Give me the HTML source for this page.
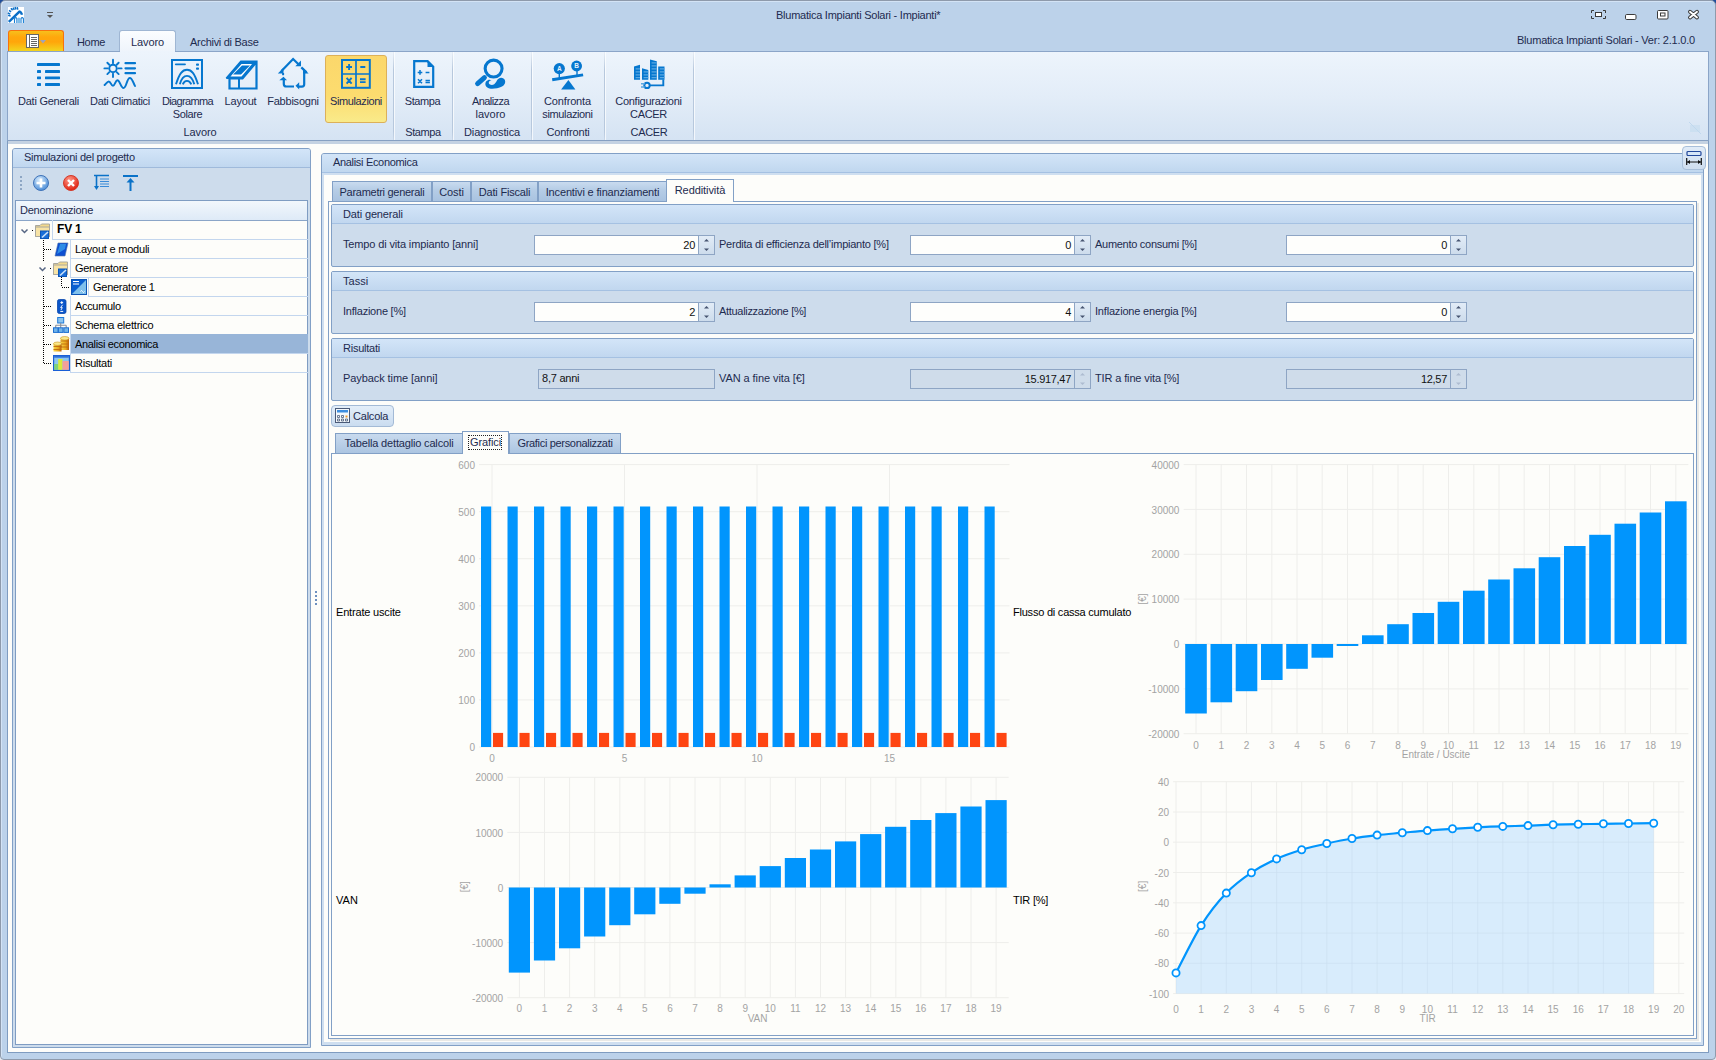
<!DOCTYPE html><html><head><meta charset="utf-8"><title>Blumatica</title><style>
*{margin:0;padding:0;box-sizing:border-box}
html,body{width:1716px;height:1060px;overflow:hidden}
body{position:relative;background:#e9eef3;font-family:"Liberation Sans",sans-serif;font-size:11px;color:#1e2b4f}
.a{position:absolute}
.t{position:absolute;white-space:nowrap;line-height:13px}
svg{position:absolute;overflow:visible}
</style></head><body><div class="a" style="left:0px;top:0px;width:5px;height:5px;background:#1f4d9a"></div><div class="a" style="left:1711px;top:0px;width:5px;height:5px;background:#1f4d9a"></div><div class="a" style="left:0px;top:0px;width:1716px;height:1060px;background:#bcd2ea;border:1px solid #8e9aab;border-radius:5px 5px 4px 4px;box-shadow:inset 1px 1px 0 #d3e3f5"></div><div class="a" style="left:7px;top:140px;width:1702px;height:913px;background:#fdfdfa;border:1px solid #7f9cc0;border-top:none"></div><svg style="left:8px;top:7px" width="16" height="16" viewBox="0 0 16 16"><rect width="16" height="16" fill="#fff"/><path d="M2.60 9.05L0.10 8.35M2.23 7.15L-0.13 6.05M3.08 4.95L1.02 3.35M4.59 3.34L2.91 1.36M6.32 2.86L4.98 0.64M7.97 2.46L7.03 0.04M9.75 2.58L9.25 0.02" stroke="#0b6fc7" stroke-width="1.5"/><path d="M0.8 14.8 L11.5 4.6 Q13.2 4.8 14 7.8" stroke="#0b6fc7" stroke-width="2.4" fill="none"/><path d="M6.5 16V11.5Q7.7 9.8 8.9 11.5V16M13 16V11.5Q14.2 9.8 15.4 11.5V16" stroke="#1a7fd4" stroke-width="1.1" fill="none"/><path d="M9.6 16V11.5Q10.9 9.5 12.2 11.5V16Z" fill="#7fbce8"/></svg><svg style="left:46px;top:11px" width="8" height="8" viewBox="0 0 8 8"><rect x="1" y="1" width="6" height="1" fill="#555"/><path d="M1 4 H7 L4 7 Z" fill="#555"/></svg><div class="t" style="left:776px;top:9px;font-size:11px;color:#1e2b4f;letter-spacing:-0.25px;">Blumatica Impianti Solari - Impianti*</div><svg style="left:1591px;top:10px" width="15" height="9" viewBox="0 0 15 9"><path d="M0.5 3 V0.5 H3 M12 0.5 H14.5 V3 M14.5 6 V8.5 H12 M3 8.5 H0.5 V6" stroke="#3a3a3a" fill="none"/><rect x="4.5" y="2.5" width="6" height="4" stroke="#3a3a3a" fill="#fff"/></svg><svg style="left:1625px;top:14px" width="12" height="7" viewBox="0 0 12 7"><rect x="0.5" y="0.5" width="10.5" height="5" rx="1.2" stroke="#3a3a3a" stroke-width="1" fill="#fff"/></svg><svg style="left:1657px;top:10px" width="12" height="10" viewBox="0 0 12 10"><rect x="0.5" y="0.5" width="10.5" height="8.5" rx="1" stroke="#3a3a3a" stroke-width="1" fill="#fff"/><rect x="3.5" y="3" width="4.5" height="3" stroke="#3a3a3a" stroke-width="1" fill="#fff"/></svg><svg style="left:1687px;top:9px" width="13" height="11" viewBox="0 0 13 11"><path d="M3 2.8 L10 8.5 M10 2.8 L3 8.5" stroke="#3a3a3a" stroke-width="3.9" stroke-linecap="round"/><path d="M3 2.8 L10 8.5 M10 2.8 L3 8.5" stroke="#fff" stroke-width="1.9" stroke-linecap="round"/></svg><div class="a" style="left:8px;top:30px;width:56px;height:21px;background:linear-gradient(#f7c01c,#ffa70c 30%,#ffa60a 55%,#f2d41f);border:1px solid #f7720c;border-bottom:none;border-radius:3px 3px 0 0"></div><svg style="left:26px;top:34px" width="14" height="14" viewBox="0 0 14 14"><rect x="0.5" y="0.5" width="12" height="13" fill="#fff" stroke="#666"/><rect x="0.5" y="0.5" width="3" height="13" fill="#fff" stroke="#666"/><path d="M5 3.5H11M5 5.5H11M5 7.5H11M5 9.5H11M5 11.5H11" stroke="#666"/></svg><svg style="left:40px;top:40px" width="6" height="4" viewBox="0 0 6 4"><path d="M0 0H6L3 3.5Z" fill="#a0a4b8"/></svg><div class="t" style="left:77px;top:36px;font-size:11px;color:#1e2b4f;letter-spacing:-0.333px;">Home</div><div class="a" style="left:119px;top:30px;width:57px;height:22px;background:linear-gradient(#fbfdff,#eef4fb);border:1px solid #9fb6d3;border-bottom:none;border-radius:3px 3px 0 0"></div><div class="t" style="left:131px;top:36px;font-size:11px;color:#1e2b4f;letter-spacing:-0.1px;">Lavoro</div><div class="t" style="left:190px;top:36px;font-size:11px;color:#1e2b4f;letter-spacing:-0.286px;">Archivi di Base</div><div class="t" style="left:1517px;top:34px;font-size:11px;color:#1e2b4f;letter-spacing:-0.231px;">Blumatica Impianti Solari - Ver: 2.1.0.0</div><div class="a" style="left:7px;top:51px;width:1702px;height:90px;background:linear-gradient(#edf4fc,#e3edf8 50%,#d5e3f3);border:1px solid #8ba5c8;border-bottom-color:#86a0c2"></div><div class="a" style="left:8px;top:141px;width:1700px;height:3px;background:#c4d2e2"></div><div class="a" style="left:120px;top:51px;width:55px;height:1px;background:#edf4fc"></div><div class="a" style="left:393px;top:52px;width:1px;height:88px;background:linear-gradient(#e8eef6,#b7c8dd 20%,#b7c8dd 90%,#c9d7e8)"></div><div class="a" style="left:394px;top:52px;width:1px;height:88px;background:rgba(255,255,255,0.7)"></div><div class="a" style="left:452px;top:52px;width:1px;height:88px;background:linear-gradient(#e8eef6,#b7c8dd 20%,#b7c8dd 90%,#c9d7e8)"></div><div class="a" style="left:453px;top:52px;width:1px;height:88px;background:rgba(255,255,255,0.7)"></div><div class="a" style="left:531px;top:52px;width:1px;height:88px;background:linear-gradient(#e8eef6,#b7c8dd 20%,#b7c8dd 90%,#c9d7e8)"></div><div class="a" style="left:532px;top:52px;width:1px;height:88px;background:rgba(255,255,255,0.7)"></div><div class="a" style="left:604px;top:52px;width:1px;height:88px;background:linear-gradient(#e8eef6,#b7c8dd 20%,#b7c8dd 90%,#c9d7e8)"></div><div class="a" style="left:605px;top:52px;width:1px;height:88px;background:rgba(255,255,255,0.7)"></div><div class="a" style="left:693px;top:52px;width:1px;height:88px;background:linear-gradient(#e8eef6,#b7c8dd 20%,#b7c8dd 90%,#c9d7e8)"></div><div class="a" style="left:694px;top:52px;width:1px;height:88px;background:rgba(255,255,255,0.7)"></div><div class="a" style="left:325px;top:55px;width:62px;height:68px;background:linear-gradient(#fbd76b,#fcdc6f 60%,#f9ea8a);border:1px solid #dcb05a;border-radius:3px"></div><svg style="left:37px;top:62px" width="24" height="25" viewBox="0 0 24 25"><rect x="0" y="1" width="23" height="2.9" rx="0.4" fill="#0677cf"/><rect x="0" y="8" width="4" height="2.9" rx="0.4" fill="#0677cf"/><rect x="8" y="8" width="15" height="2.9" rx="0.4" fill="#0677cf"/><rect x="0" y="14.6" width="4" height="2.6" rx="0.4" fill="#0677cf"/><rect x="8" y="14.6" width="15" height="2.6" rx="0.4" fill="#0677cf"/><rect x="0" y="21" width="4" height="2.9" rx="0.4" fill="#0677cf"/><rect x="8" y="21" width="15" height="2.9" rx="0.4" fill="#0677cf"/></svg><svg style="left:104px;top:59px" width="33" height="31" viewBox="0 0 33 31"><circle cx="9" cy="9.4" r="3.7" fill="none" stroke="#0677cf" stroke-width="1.9"/><path d="M14.20 9.40L17.60 9.40M12.68 13.08L14.66 15.06M9.00 14.60L9.00 18.00M5.32 13.08L3.34 15.06M3.80 9.40L0.40 9.40M5.32 5.72L3.34 3.74M9.00 4.20L9.00 0.80M12.68 5.72L14.66 3.74" stroke="#0677cf" stroke-width="1.9" stroke-linecap="round"/><path d="M21.5 4.2H31M21.5 9.3H31M21.5 14.2H31" stroke="#0677cf" stroke-width="2.2" stroke-linecap="round"/><path d="M0.6 26 C2.5 24 3.5 22.5 4.8 22.5 C6.8 22.5 7 26.7 9 26.7 C11 26.7 11.5 21.3 13.4 21.3 C15.8 21.3 17 29 19.5 29 C22.5 29 22.8 19 25.8 19 C28.5 19 29.5 25 31 27" stroke="#0677cf" stroke-width="2" fill="none" stroke-linecap="round"/></svg><svg style="left:171px;top:59px" width="32" height="30" viewBox="0 0 32 30"><rect x="1" y="1" width="30" height="28" fill="none" stroke="#0677cf" stroke-width="2"/><path d="M4.8 5.3H14" stroke="#0677cf" stroke-width="1.8" stroke-linecap="round"/><rect x="25" y="4.6" width="3" height="2.2" rx="0.8" fill="#0677cf"/><rect x="25" y="8.6" width="3" height="2.2" rx="0.8" fill="#0677cf"/><path d="M5 25.3 C8.5 14 11.5 10.8 16 10.8 C20.5 10.8 23.5 14 27 25.3" stroke="#0677cf" stroke-width="1.9" fill="none"/><path d="M8.8 25.3 C10.5 19 12.8 16.9 16 16.9 C19.2 16.9 21.5 19 23.3 25.3" stroke="#0677cf" stroke-width="1.9" fill="none"/><path d="M11.8 25.3 C12.8 22.8 14 21.9 16 21.9 C18 21.9 19.2 22.8 20.3 25.3" stroke="#0677cf" stroke-width="1.9" fill="none"/></svg><svg style="left:225px;top:60px" width="33" height="30" viewBox="0 0 33 30"><path d="M1.5 18.5 L16 1.5 H31.5 V28.5 H4.5 V18.5 H17.5 L31 2.5" stroke="#0677cf" stroke-width="2.2" fill="none" stroke-linejoin="miter"/><path d="M1 19 L16 1 H32 L17 19 Z" fill="#0677cf"/><path d="M5.5 16.5 L16.5 4 H27 L16.5 16.5 Z" fill="#fff" /><path d="M8 14.5 L17 5.5 H25 L16 14.5 Z" fill="#0677cf"/><path d="M14 19V28" stroke="#0677cf" stroke-width="2"/></svg><svg style="left:277px;top:58px" width="33" height="32" viewBox="0 0 33 32"><path d="M4.5 13 L16.1 1 L22.5 7.3" stroke="#0677cf" stroke-width="2.2" fill="none"/><path d="M0.8 15.4 L6.5 9.7 V15.4 Z" fill="#0677cf"/><path d="M6.1 15 V17.2" stroke="#0677cf" stroke-width="2"/><path d="M18.3 8.2 H24 V2.5 Z" fill="#0677cf"/><path d="M24.3 9.4 L29.5 14.4" stroke="#0677cf" stroke-width="2.2"/><path d="M26 15.4 H31.6 L26 9.8 Z" fill="#0677cf"/><path d="M27.2 15 V26.3 Q27.2 28.6 24.9 28.6 H21.5" stroke="#0677cf" stroke-width="2.2" fill="none"/><path d="M22.2 24.2 V31.5 L18.5 27.8 Z" fill="#0677cf"/><path d="M17 28.5 H9.3 Q6.8 28.5 6.8 26 V21.5" stroke="#0677cf" stroke-width="2.2" fill="none"/><path d="M2.3 22.2 H10 L6.5 18.8 Z" fill="#0677cf"/></svg><svg style="left:341px;top:59px" width="31" height="30" viewBox="0 0 31 30"><rect x="1" y="1" width="27.8" height="27.8" fill="none" stroke="#0677cf" stroke-width="2"/><path d="M15 1V29M1 15H29" stroke="#0677cf" stroke-width="1.7"/><path d="M5.2 8H11M8.1 5.1V10.9M19.3 8H24.3" stroke="#0677cf" stroke-width="1.9"/><path d="M5.6 18.8L10.6 24.6M10.6 18.8L5.6 24.6M19 20.3H24.6M19 23.1H24.6" stroke="#0677cf" stroke-width="1.9"/></svg><svg style="left:413px;top:60px" width="22" height="29" viewBox="0 0 22 29"><path d="M1.2 1.2 H14.6 L20.2 6.8 V26.8 H1.2 Z" fill="none" stroke="#0677cf" stroke-width="2.2"/><path d="M14.5 1 V7 H20.5 Z" fill="#0677cf"/><path d="M4.7 12.4H9.3M7 10.1V14.7M12.6 12.4H16.4M5 19.3L9 23.3M9 19.3L5 23.3M12.5 20.4H16.9M12.5 22.5H16.9" stroke="#0677cf" stroke-width="1.5"/></svg><svg style="left:475px;top:58px" width="32" height="31" viewBox="0 0 32 31"><circle cx="18.6" cy="10.6" r="8.45" fill="none" stroke="#0677cf" stroke-width="3.1"/><path d="M2.6 25.6 L9.4 19.7" stroke="#0677cf" stroke-width="5" stroke-linecap="round"/><path d="M16.5 22.3 C15 21.3 13 21.3 11.3 23.3 C9.3 26 10.5 29.5 14.5 30.5 C18 31.3 23 30.3 27 28.5 C31 26.5 31 22 28.5 20.5 C26 19 23 20 21.4 23.5 C19.5 27 17 27.5 15 26.5 C13 25.5 13.5 22.8 16.5 22.3 Z" fill="#0677cf"/></svg><svg style="left:551px;top:60px" width="33" height="30" viewBox="0 0 33 30"><path d="M1.2 19.8 L32.1 14.9" stroke="#0677cf" stroke-width="2.9"/><circle cx="8.3" cy="8.6" r="5.6" fill="#0677cf"/><circle cx="25.6" cy="6" r="5.4" fill="#0677cf"/><path d="M8.3 13V18.5M26 11V16" stroke="#0677cf" stroke-width="1.4"/><path d="M10.1 29.6 L17.4 20.1 L24.4 29.6 Z" fill="#0677cf"/><text x="8.3" y="11" font-size="6.5" font-weight="bold" fill="#e6f0fa" text-anchor="middle" font-family="Liberation Sans">A</text><text x="25.6" y="8.4" font-size="6.5" font-weight="bold" fill="#e6f0fa" text-anchor="middle" font-family="Liberation Sans">B</text></svg><svg style="left:633px;top:59px" width="33" height="30" viewBox="0 0 33 30"><path d="M1 7.5 L7 5.8 V20.8 H1 Z M9 9.3 L15.3 11 V20.8 H9 Z M17 0.5 L23.8 2.3 V20.8 H17 Z M25.2 7.5 H31.5 V20.8 H25.2 Z" fill="#0677cf"/><path d="M2.6 9.8H7M2.6 12.8H7M2.6 15.9H7M2.6 18.7H7M10.6 12.8H15.3M10.6 15.9H15.3M10.6 18.7H15.3M18.6 3.8H23.8M18.6 6.8H23.8M18.6 9.8H23.8M18.6 12.8H23.8M18.6 15.9H23.8M18.6 18.7H23.8M26.8 9.8H31.5M26.8 12.8H31.5M26.8 15.9H31.5M26.8 18.7H31.5" stroke="#5aa8e2" stroke-width="1.3"/><path d="M30.3 20.5 V26.4 H16.5" stroke="#0677cf" stroke-width="1.9" fill="none"/><circle cx="14" cy="26.4" r="2.7" fill="none" stroke="#0677cf" stroke-width="2"/><path d="M8 24.7 H11.8 M8 28 H11.8" stroke="#5aa8e2" stroke-width="1.5"/></svg><div class="t" style="left:-51.5px;width:200px;text-align:center;top:95px;letter-spacing:-0.25px">Dati Generali</div><div class="t" style="left:20px;width:200px;text-align:center;top:95px;letter-spacing:-0.308px">Dati Climatici</div><div class="t" style="left:87.5px;width:200px;text-align:center;top:95px;letter-spacing:-0.625px">Diagramma</div><div class="t" style="left:87.5px;width:200px;text-align:center;top:108px;letter-spacing:-0.4px">Solare</div><div class="t" style="left:140.5px;width:200px;text-align:center;top:95px;letter-spacing:-0.2px">Layout</div><div class="t" style="left:193px;width:200px;text-align:center;top:95px;letter-spacing:-0.222px">Fabbisogni</div><div class="t" style="left:256px;width:200px;text-align:center;top:95px;letter-spacing:-0.4px">Simulazioni</div><div class="t" style="left:322.5px;width:200px;text-align:center;top:95px;letter-spacing:-0.4px">Stampa</div><div class="t" style="left:390.5px;width:200px;text-align:center;top:95px;letter-spacing:-0.571px">Analizza</div><div class="t" style="left:390.5px;width:200px;text-align:center;top:108px;letter-spacing:0.0px">lavoro</div><div class="t" style="left:467.5px;width:200px;text-align:center;top:95px;letter-spacing:-0.162px">Confronta</div><div class="t" style="left:467.5px;width:200px;text-align:center;top:108px;letter-spacing:-0.37px">simulazioni</div><div class="t" style="left:548.5px;width:200px;text-align:center;top:95px;letter-spacing:-0.277px">Configurazioni</div><div class="t" style="left:548.5px;width:200px;text-align:center;top:108px;letter-spacing:-0.325px">CACER</div><div class="t" style="left:100px;width:200px;text-align:center;top:126px;letter-spacing:-0.1px">Lavoro</div><div class="t" style="left:323px;width:200px;text-align:center;top:126px;letter-spacing:-0.4px">Stampa</div><div class="t" style="left:392px;width:200px;text-align:center;top:126px;letter-spacing:-0.14px">Diagnostica</div><div class="t" style="left:468px;width:200px;text-align:center;top:126px;letter-spacing:-0.175px">Confronti</div><div class="t" style="left:549px;width:200px;text-align:center;top:126px;letter-spacing:-0.325px">CACER</div><svg style="left:1689px;top:122px" width="12" height="12" viewBox="0 0 12 12"><rect x="1" y="3" width="10" height="7" fill="#c9dff0" opacity="0.8"/><path d="M0 0L12 12" stroke="#c0d8ee"/></svg><div class="a" style="left:12px;top:148px;width:299px;height:900px;background:#cddcec;border:1px solid #82a0c6;border-radius:3px 3px 0 0"></div><div class="a" style="left:13px;top:149px;width:297px;height:19px;background:linear-gradient(#d3e5f8,#c0d7ef);border-bottom:1px solid #9fbadb;border-radius:2px 2px 0 0"></div><div class="t" style="left:24px;top:151px;font-size:11px;color:#1e2b4f;letter-spacing:-0.278px;">Simulazioni del progetto</div><div class="a" style="left:20px;top:176px;width:2px;height:2px;background:#8da6c4"></div><div class="a" style="left:20px;top:180px;width:2px;height:2px;background:#8da6c4"></div><div class="a" style="left:20px;top:184px;width:2px;height:2px;background:#8da6c4"></div><div class="a" style="left:20px;top:188px;width:2px;height:2px;background:#8da6c4"></div><svg style="left:33px;top:175px" width="16" height="16" viewBox="0 0 16 16"><defs><radialGradient id="gA" cx="40%" cy="30%" r="70%"><stop offset="0" stop-color="#d7ecfd"/><stop offset="1" stop-color="#4f8fd8"/></radialGradient></defs><circle cx="8" cy="8" r="7.5" fill="url(#gA)" stroke="#3f73b8"/><path d="M8 3.5V12.5M3.5 8H12.5" stroke="#fff" stroke-width="2.6"/><path d="M8 4V12M4 8H12" stroke="#fff" stroke-width="1.8"/></svg><svg style="left:63px;top:175px" width="16" height="16" viewBox="0 0 16 16"><defs><radialGradient id="gR" cx="40%" cy="30%" r="70%"><stop offset="0" stop-color="#ff9a8a"/><stop offset="1" stop-color="#e0200f"/></radialGradient></defs><circle cx="8" cy="8" r="7.5" fill="url(#gR)" stroke="#d33a2a"/><path d="M5 5L11 11M11 5L5 11" stroke="#fff" stroke-width="2.4"/></svg><svg style="left:94px;top:175px" width="15" height="15" viewBox="0 0 15 15"><path d="M0 0.5H15" stroke="#0a72c8" stroke-width="1.5"/><path d="M2.5 1V12" stroke="#0a72c8" stroke-width="1.6"/><path d="M0 11H5L2.5 15Z" fill="#0a72c8"/><path d="M6 4H15M6 6.5H15M6 9H15M6 11.5H15" stroke="#3a8bd8" stroke-width="1.2"/></svg><svg style="left:123px;top:175px" width="15" height="16" viewBox="0 0 15 16"><path d="M0 1H15" stroke="#0a72c8" stroke-width="2"/><path d="M7.5 6V16" stroke="#0a72c8" stroke-width="2"/><path d="M3.5 7.5L7.5 3L11.5 7.5Z" fill="#0a72c8"/></svg><div class="a" style="left:15px;top:200px;width:293px;height:845px;background:#fdfdfa;border:1px solid #7f9cc2"></div><div class="a" style="left:16px;top:201px;width:291px;height:20px;background:linear-gradient(#f2f7fc,#deeaf7);border-bottom:1px solid #8aa5c8"></div><div class="t" style="left:20px;top:204px;font-size:11px;color:#1e2b4f;letter-spacing:-0.258px;">Denominazione</div><div class="a" style="left:52px;top:220px;width:256px;height:20px;background:transparent;border-left:1px solid #c3d6ee;border-bottom:1px solid #c3d6ee"></div><div class="t" style="left:57px;top:223px;font-size:12px;font-weight:bold;color:#000;letter-spacing:-0.2px">FV 1</div><div class="a" style="left:70px;top:239px;width:238px;height:20px;background:transparent;border-left:1px solid #c3d6ee;border-bottom:1px solid #c3d6ee"></div><div class="t" style="left:75px;top:243px;font-size:11px;color:#000;letter-spacing:-0.221px;">Layout e moduli</div><div class="a" style="left:70px;top:258px;width:238px;height:20px;background:transparent;border-left:1px solid #c3d6ee;border-bottom:1px solid #c3d6ee"></div><div class="t" style="left:75px;top:262px;font-size:11px;color:#000;letter-spacing:-0.278px;">Generatore</div><div class="a" style="left:88px;top:277px;width:220px;height:20px;background:transparent;border-left:1px solid #c3d6ee;border-bottom:1px solid #c3d6ee"></div><div class="t" style="left:93px;top:281px;font-size:11px;color:#000;letter-spacing:-0.264px;">Generatore 1</div><div class="a" style="left:70px;top:296px;width:238px;height:20px;background:transparent;border-left:1px solid #c3d6ee;border-bottom:1px solid #c3d6ee"></div><div class="t" style="left:75px;top:300px;font-size:11px;color:#000;letter-spacing:-0.329px;">Accumulo</div><div class="a" style="left:70px;top:315px;width:238px;height:20px;background:transparent;border-left:1px solid #c3d6ee;border-bottom:1px solid #c3d6ee"></div><div class="t" style="left:75px;top:319px;font-size:11px;color:#000;letter-spacing:-0.213px;">Schema elettrico</div><div class="a" style="left:70px;top:334px;width:238px;height:20px;background:#98b5d8;border-left:1px solid #c3d6ee;border-bottom:1px solid #c3d6ee"></div><div class="t" style="left:75px;top:338px;font-size:11px;color:#000;letter-spacing:-0.331px;">Analisi economica</div><div class="a" style="left:70px;top:353px;width:238px;height:20px;background:transparent;border-left:1px solid #c3d6ee;border-bottom:1px solid #c3d6ee"></div><div class="t" style="left:75px;top:357px;font-size:11px;color:#000;letter-spacing:-0.237px;">Risultati</div><div class="a" style="left:43px;top:240px;width:1px;height:22px;background:repeating-linear-gradient(#000 0 1px,transparent 1px 2px)"></div><div class="a" style="left:43px;top:276px;width:1px;height:87px;background:repeating-linear-gradient(#000 0 1px,transparent 1px 2px)"></div><div class="a" style="left:44px;top:249px;width:8px;height:1px;background:repeating-linear-gradient(90deg,#000 0 1px,transparent 1px 2px)"></div><div class="a" style="left:44px;top:306px;width:8px;height:1px;background:repeating-linear-gradient(90deg,#000 0 1px,transparent 1px 2px)"></div><div class="a" style="left:44px;top:325px;width:8px;height:1px;background:repeating-linear-gradient(90deg,#000 0 1px,transparent 1px 2px)"></div><div class="a" style="left:44px;top:344px;width:8px;height:1px;background:repeating-linear-gradient(90deg,#000 0 1px,transparent 1px 2px)"></div><div class="a" style="left:44px;top:363px;width:8px;height:1px;background:repeating-linear-gradient(90deg,#000 0 1px,transparent 1px 2px)"></div><div class="a" style="left:32px;top:230px;width:1px;height:1px;background:#000"></div><div class="a" style="left:50px;top:268px;width:1px;height:1px;background:#000"></div><div class="a" style="left:61px;top:277px;width:1px;height:10px;background:repeating-linear-gradient(#000 0 1px,transparent 1px 2px)"></div><div class="a" style="left:62px;top:287px;width:8px;height:1px;background:repeating-linear-gradient(90deg,#000 0 1px,transparent 1px 2px)"></div><svg style="left:21px;top:229px" width="7" height="5" viewBox="0 0 7 5"><path d="M0.5 0.5L3.5 3.5L6.5 0.5" stroke="#566683" stroke-width="1.5" fill="none"/></svg><svg style="left:39px;top:267px" width="7" height="5" viewBox="0 0 7 5"><path d="M0.5 0.5L3.5 3.5L6.5 0.5" stroke="#566683" stroke-width="1.5" fill="none"/></svg><svg style="left:35px;top:223px" width="15" height="16" viewBox="0 0 15 16"><path d="M0.5 2.5H5L6.5 1H14.5V13.5H0.5Z" fill="#f3d98b" stroke="#a8a8a0"/><path d="M0.5 4H14.5V13.5H0.5Z" fill="#f7e3a5" stroke="#a8a8a0"/><rect x="5.5" y="8" width="8" height="7.5" fill="#1b6fd8" stroke="#0b55b8"/><path d="M7 14.5L13 9" stroke="#cfe4fa" stroke-width="1.6"/></svg><svg style="left:53px;top:261px" width="15" height="16" viewBox="0 0 15 16"><path d="M0.5 2.5H5L6.5 1H14.5V13.5H0.5Z" fill="#f3d98b" stroke="#a8a8a0"/><path d="M0.5 4H14.5V13.5H0.5Z" fill="#f7e3a5" stroke="#a8a8a0"/><rect x="5.5" y="8" width="8" height="7.5" fill="#1b6fd8" stroke="#0b55b8"/><path d="M7 14.5L13 9" stroke="#cfe4fa" stroke-width="1.6"/></svg><svg style="left:54px;top:242px" width="15" height="15" viewBox="0 0 15 15"><path d="M4 1H14L11 14H1Z" fill="#0d4fd0" stroke="#5577aa" stroke-width="0.6"/><path d="M6 2H12L11 7L3 12Z" fill="#2f8de6"/></svg><svg style="left:71px;top:279px" width="16" height="16" viewBox="0 0 16 16"><rect x="0.5" y="0.5" width="15" height="15" fill="#0a5fd0" stroke="#0b54b5"/><path d="M15 1V15H1Z" fill="#7fc0ec"/><path d="M2 2.5H8M2 5H8" stroke="#fff" stroke-width="1.2"/><path d="M9.5 12.5Q10.5 10.5 11.5 12.5T13.5 12.5" stroke="#fff" fill="none"/></svg><svg style="left:57px;top:299px" width="10" height="15" viewBox="0 0 10 15"><rect x="0.5" y="0.5" width="8.5" height="14" rx="1.8" fill="#0b56c9" stroke="#0a49ad" stroke-width="0.8"/><path d="M4.75 2.2V5M3.35 3.6H6.15M3.3 12.4H6.2" stroke="#fff" stroke-width="1"/><path d="M5.6 5.8L3.6 8.6H5.3L4 11" stroke="#fff" stroke-width="0.9" fill="none"/></svg><svg style="left:53px;top:317px" width="18" height="16" viewBox="0 0 18 16"><rect x="4.7" y="0.5" width="6" height="5.5" fill="#8cc4ee" stroke="#1f7ad8"/><path d="M7.7 6V8.2M2.7 8.2H13.2M2.7 8.2V11M7.7 8.2V11M13.2 8.2V11" stroke="#8a8f98" stroke-width="1.1" fill="none"/><rect x="0.5" y="10.8" width="4.6" height="4.6" fill="#6fb4ea" stroke="#1f6fd0"/><rect x="5.4" y="10.8" width="4.6" height="4.6" fill="#6fb4ea" stroke="#1f6fd0"/><rect x="10.9" y="10.8" width="4.6" height="4.6" fill="#6fb4ea" stroke="#1f6fd0"/></svg><svg style="left:53px;top:336px" width="17" height="17" viewBox="0 0 17 17"><defs><linearGradient id="gc" x1="0" x2="1"><stop offset="0" stop-color="#f8d84a"/><stop offset="0.6" stop-color="#e9a81a"/><stop offset="1" stop-color="#b85a0a"/></linearGradient></defs><rect x="7.5" y="2" width="8.5" height="12" fill="url(#gc)"/><path d="M7.5 5H16M7.5 8H16M7.5 11H16" stroke="#c06a10" stroke-width="0.9"/><ellipse cx="11.75" cy="2.3" rx="4.25" ry="1.8" fill="#fbe88a" stroke="#c8901a" stroke-width="0.6"/><rect x="0.5" y="7.5" width="8" height="8" fill="url(#gc)"/><path d="M0.5 10.5H8.5M0.5 13.5H8.5" stroke="#c06a10" stroke-width="0.9"/><ellipse cx="4.5" cy="7.7" rx="4" ry="1.7" fill="#fbe88a" stroke="#c8901a" stroke-width="0.6"/></svg><svg style="left:53px;top:355px" width="17" height="16" viewBox="0 0 17 16"><rect x="0.6" y="0.6" width="15.8" height="14.8" fill="#8ec6ee" stroke="#1a5fd6" stroke-width="1.2"/><rect x="1.2" y="1.2" width="14.6" height="1.4" fill="#1a5fd6"/><rect x="1.2" y="9" width="4" height="5.8" fill="#7ed27a"/><rect x="5.2" y="4" width="4.3" height="10.8" fill="#d8ec3a"/><rect x="9.5" y="6" width="6.3" height="8.8" fill="#f4a09a"/></svg><div class="a" style="left:315px;top:591px;width:2px;height:2px;background:#6d90bf"></div><div class="a" style="left:315px;top:595px;width:2px;height:2px;background:#6d90bf"></div><div class="a" style="left:315px;top:599px;width:2px;height:2px;background:#6d90bf"></div><div class="a" style="left:315px;top:603px;width:2px;height:2px;background:#6d90bf"></div><div class="a" style="left:321px;top:153px;width:1383px;height:893px;background:#cfdff0;border:1px solid #82a0c6;border-radius:3px 3px 0 0"></div><div class="a" style="left:322px;top:154px;width:1381px;height:19px;background:linear-gradient(#d3e5f8,#c0d7ef);border-bottom:1px solid #a5c1e2;border-radius:2px 2px 0 0"></div><div class="t" style="left:333px;top:156px;font-size:11px;color:#1e2b4f;letter-spacing:-0.319px;">Analisi Economica</div><div class="a" style="left:324px;top:175px;width:1377px;height:867px;background:#fdfdfa"></div><div class="a" style="left:1682px;top:146px;width:24px;height:24px;background:linear-gradient(#e1ecf8,#cfdeef);border:1px solid #a8bfda;border-radius:4px"></div><svg style="left:1686px;top:150px" width="16" height="16" viewBox="0 0 16 16"><rect x="1" y="1.5" width="14" height="4" rx="1" fill="#d6e6f7" stroke="#23489a" stroke-width="1.2"/><path d="M0.7 8V15M15.3 8V15M1 12H15" stroke="#111" stroke-width="1.2"/><path d="M1 12L4 10V14ZM15 12L12 10V14Z" fill="#111"/></svg><div class="a" style="left:328px;top:201px;width:1369px;height:838px;background:#fdfdfa;border:1px solid #82a0c6;box-shadow:2px 2px 0 #e9e9e6"></div><div class="a" style="left:332px;top:181px;width:100px;height:21px;background:linear-gradient(#c9dbef,#b6cde6 40%,#a9c3e0);border:1px solid #82a0c6"></div><div class="t" style="left:332px;width:100px;text-align:center;top:186px;letter-spacing:-0.276px">Parametri generali</div><div class="a" style="left:432px;top:181px;width:39px;height:21px;background:linear-gradient(#c9dbef,#b6cde6 40%,#a9c3e0);border:1px solid #82a0c6"></div><div class="t" style="left:432px;width:39px;text-align:center;top:186px;letter-spacing:-0.1px">Costi</div><div class="a" style="left:471px;top:181px;width:67px;height:21px;background:linear-gradient(#c9dbef,#b6cde6 40%,#a9c3e0);border:1px solid #82a0c6"></div><div class="t" style="left:471px;width:67px;text-align:center;top:186px;letter-spacing:-0.2px">Dati Fiscali</div><div class="a" style="left:538px;top:181px;width:129px;height:21px;background:linear-gradient(#c9dbef,#b6cde6 40%,#a9c3e0);border:1px solid #82a0c6"></div><div class="t" style="left:538px;width:129px;text-align:center;top:186px;letter-spacing:-0.154px">Incentivi e finanziamenti</div><div class="a" style="left:666px;top:179px;width:68px;height:23px;background:#fdfdfa;border:1px solid #82a0c6;border-bottom:none"></div><div class="t" style="left:666px;width:68px;text-align:center;top:184px;letter-spacing:-0.08px">Redditività</div><div class="a" style="left:331px;top:204px;width:1363px;height:63px;background:#cddcec;border:1px solid #82a0c6;border-radius:2px"></div><div class="a" style="left:332px;top:205px;width:1361px;height:19px;background:linear-gradient(#d3e5f8,#c1d7ef);border-bottom:1px solid #a5c1e2"></div><div class="t" style="left:343px;top:208px;font-size:11px;color:#1e2b4f;letter-spacing:-0.142px;">Dati generali</div><div class="a" style="left:331px;top:271px;width:1363px;height:63px;background:#cddcec;border:1px solid #82a0c6;border-radius:2px"></div><div class="a" style="left:332px;top:272px;width:1361px;height:19px;background:linear-gradient(#d3e5f8,#c1d7ef);border-bottom:1px solid #a5c1e2"></div><div class="t" style="left:343px;top:275px;font-size:11px;color:#1e2b4f;letter-spacing:0.025px;">Tassi</div><div class="a" style="left:331px;top:338px;width:1363px;height:63px;background:#cddcec;border:1px solid #82a0c6;border-radius:2px"></div><div class="a" style="left:332px;top:339px;width:1361px;height:19px;background:linear-gradient(#d3e5f8,#c1d7ef);border-bottom:1px solid #a5c1e2"></div><div class="t" style="left:343px;top:342px;font-size:11px;color:#1e2b4f;letter-spacing:-0.237px;">Risultati</div><div class="t" style="left:343px;top:238px;font-size:11px;color:#1e2b4f;letter-spacing:-0.143px;">Tempo di vita impianto [anni]</div><div class="t" style="left:719px;top:238px;font-size:11px;color:#1e2b4f;letter-spacing:-0.237px;">Perdita di efficienza dell’impianto [%]</div><div class="t" style="left:1095px;top:238px;font-size:11px;color:#1e2b4f;letter-spacing:-0.278px;">Aumento consumi [%]</div><div class="a" style="left:534px;top:235px;width:181px;height:20px;background:#fefefc;border:1px solid #8ea5c4"></div><div class="a" style="left:698px;top:235px;width:17px;height:20px;background:linear-gradient(#e2ecf7,#cddcec);border:1px solid #8ea5c4"></div><svg style="left:699px;top:236px" width="15" height="18" viewBox="0 0 15 18"><path d="M5 5.5L7.5 3L10 5.5Z" fill="#465470"/><path d="M5 12.5L7.5 15L10 12.5Z" fill="#465470"/></svg><div class="t" style="left:545px;width:150px;text-align:right;top:239px;color:#111;letter-spacing:-0.3px">20</div><div class="a" style="left:910px;top:235px;width:181px;height:20px;background:#fefefc;border:1px solid #8ea5c4"></div><div class="a" style="left:1074px;top:235px;width:17px;height:20px;background:linear-gradient(#e2ecf7,#cddcec);border:1px solid #8ea5c4"></div><svg style="left:1075px;top:236px" width="15" height="18" viewBox="0 0 15 18"><path d="M5 5.5L7.5 3L10 5.5Z" fill="#465470"/><path d="M5 12.5L7.5 15L10 12.5Z" fill="#465470"/></svg><div class="t" style="left:921px;width:150px;text-align:right;top:239px;color:#111;letter-spacing:-0.3px">0</div><div class="a" style="left:1286px;top:235px;width:181px;height:20px;background:#fefefc;border:1px solid #8ea5c4"></div><div class="a" style="left:1450px;top:235px;width:17px;height:20px;background:linear-gradient(#e2ecf7,#cddcec);border:1px solid #8ea5c4"></div><svg style="left:1451px;top:236px" width="15" height="18" viewBox="0 0 15 18"><path d="M5 5.5L7.5 3L10 5.5Z" fill="#465470"/><path d="M5 12.5L7.5 15L10 12.5Z" fill="#465470"/></svg><div class="t" style="left:1297px;width:150px;text-align:right;top:239px;color:#111;letter-spacing:-0.3px">0</div><div class="t" style="left:343px;top:305px;font-size:11px;color:#1e2b4f;letter-spacing:-0.231px;">Inflazione [%]</div><div class="t" style="left:719px;top:305px;font-size:11px;color:#1e2b4f;letter-spacing:-0.306px;">Attualizzazione [%]</div><div class="t" style="left:1095px;top:305px;font-size:11px;color:#1e2b4f;letter-spacing:-0.19px;">Inflazione energia [%]</div><div class="a" style="left:534px;top:302px;width:181px;height:20px;background:#fefefc;border:1px solid #8ea5c4"></div><div class="a" style="left:698px;top:302px;width:17px;height:20px;background:linear-gradient(#e2ecf7,#cddcec);border:1px solid #8ea5c4"></div><svg style="left:699px;top:303px" width="15" height="18" viewBox="0 0 15 18"><path d="M5 5.5L7.5 3L10 5.5Z" fill="#465470"/><path d="M5 12.5L7.5 15L10 12.5Z" fill="#465470"/></svg><div class="t" style="left:545px;width:150px;text-align:right;top:306px;color:#111;letter-spacing:-0.3px">2</div><div class="a" style="left:910px;top:302px;width:181px;height:20px;background:#fefefc;border:1px solid #8ea5c4"></div><div class="a" style="left:1074px;top:302px;width:17px;height:20px;background:linear-gradient(#e2ecf7,#cddcec);border:1px solid #8ea5c4"></div><svg style="left:1075px;top:303px" width="15" height="18" viewBox="0 0 15 18"><path d="M5 5.5L7.5 3L10 5.5Z" fill="#465470"/><path d="M5 12.5L7.5 15L10 12.5Z" fill="#465470"/></svg><div class="t" style="left:921px;width:150px;text-align:right;top:306px;color:#111;letter-spacing:-0.3px">4</div><div class="a" style="left:1286px;top:302px;width:181px;height:20px;background:#fefefc;border:1px solid #8ea5c4"></div><div class="a" style="left:1450px;top:302px;width:17px;height:20px;background:linear-gradient(#e2ecf7,#cddcec);border:1px solid #8ea5c4"></div><svg style="left:1451px;top:303px" width="15" height="18" viewBox="0 0 15 18"><path d="M5 5.5L7.5 3L10 5.5Z" fill="#465470"/><path d="M5 12.5L7.5 15L10 12.5Z" fill="#465470"/></svg><div class="t" style="left:1297px;width:150px;text-align:right;top:306px;color:#111;letter-spacing:-0.3px">0</div><div class="t" style="left:343px;top:372px;font-size:11px;color:#1e2b4f;letter-spacing:-0.078px;">Payback time [anni]</div><div class="t" style="left:719px;top:372px;font-size:11px;color:#1e2b4f;letter-spacing:-0.072px;">VAN a fine vita [€]</div><div class="t" style="left:1095px;top:372px;font-size:11px;color:#1e2b4f;letter-spacing:-0.133px;">TIR a fine vita [%]</div><div class="a" style="left:538px;top:369px;width:177px;height:20px;background:#cfdcea;border:1px solid #8ea5c4"></div><div class="t" style="left:542px;top:372px;font-size:11px;color:#111;letter-spacing:-0.229px;">8,7 anni</div><div class="a" style="left:910px;top:369px;width:181px;height:20px;background:#cfdcea;border:1px solid #8ea5c4"></div><div class="a" style="left:1074px;top:369px;width:17px;height:20px;background:#cfdcea;border:1px solid #8ea5c4"></div><svg style="left:1075px;top:370px" width="15" height="18" viewBox="0 0 15 18"><path d="M5 5.5L7.5 3L10 5.5Z" fill="#aebbd0"/><path d="M5 12.5L7.5 15L10 12.5Z" fill="#aebbd0"/></svg><div class="t" style="left:921px;width:150px;text-align:right;top:373px;color:#111;letter-spacing:-0.3px">15.917,47</div><div class="a" style="left:1286px;top:369px;width:181px;height:20px;background:#cfdcea;border:1px solid #8ea5c4"></div><div class="a" style="left:1450px;top:369px;width:17px;height:20px;background:#cfdcea;border:1px solid #8ea5c4"></div><svg style="left:1451px;top:370px" width="15" height="18" viewBox="0 0 15 18"><path d="M5 5.5L7.5 3L10 5.5Z" fill="#aebbd0"/><path d="M5 12.5L7.5 15L10 12.5Z" fill="#aebbd0"/></svg><div class="t" style="left:1297px;width:150px;text-align:right;top:373px;color:#111;letter-spacing:-0.3px">12,57</div><div class="a" style="left:331px;top:405px;width:63px;height:22px;background:linear-gradient(#e3eef9,#cadcf0);border:1px solid #a3bad6;border-radius:4px"></div><svg style="left:335px;top:408px" width="15" height="15" viewBox="0 0 15 15"><rect x="0.5" y="0.5" width="14" height="14" fill="#f4f8fc" stroke="#4a5a78"/><rect x="2" y="2" width="11" height="2.5" fill="#3d8ee0"/><path d="M2.5 7.5h2v2h-2zM6.5 7.5h2v2h-2zM2.5 11h2v2h-2zM6.5 11h2v2h-2zM10.5 11h2v2h-2z" fill="none" stroke="#4a5a78" stroke-width="0.8"/><rect x="10.5" y="7.5" width="2" height="2" fill="#f09a2a"/></svg><div class="t" style="left:353px;top:410px;font-size:11px;color:#1e2b4f;letter-spacing:-0.217px;">Calcola</div><div class="a" style="left:331px;top:453px;width:1363px;height:583px;background:#fdfdfa;border:1px solid #82a0c6"></div><div class="a" style="left:335px;top:433px;width:128px;height:21px;background:linear-gradient(#c8daee,#acc5e1);border:1px solid #82a0c6"></div><div class="t" style="left:335px;width:128px;text-align:center;top:437px;letter-spacing:-0.167px">Tabella dettaglio calcoli</div><div class="a" style="left:509px;top:433px;width:112px;height:21px;background:linear-gradient(#c8daee,#acc5e1);border:1px solid #82a0c6"></div><div class="t" style="left:509px;width:112px;text-align:center;top:437px;letter-spacing:-0.319px">Grafici personalizzati</div><div class="a" style="left:462px;top:431px;width:47px;height:23px;background:#fdfdfa;border:1px solid #82a0c6;border-bottom:none"></div><div class="a" style="left:468px;top:435px;width:34px;height:15px;border:1px dotted #222"></div><div class="t" style="left:462px;width:47px;text-align:center;top:436px;letter-spacing:-0.117px">Grafici</div><svg style="left:0;top:0" width="1716" height="1060" viewBox="0 0 1716 1060" font-family="Liberation Sans"><line x1="479" y1="747.0" x2="1009.5" y2="747.0" stroke="#eeeeeb" stroke-width="1"/><text x="475" y="751.1" text-anchor="end" font-size="10" fill="#a3a3a3">0</text><line x1="479" y1="699.9" x2="1009.5" y2="699.9" stroke="#eeeeeb" stroke-width="1"/><text x="475" y="704.0" text-anchor="end" font-size="10" fill="#a3a3a3">100</text><line x1="479" y1="652.9" x2="1009.5" y2="652.9" stroke="#eeeeeb" stroke-width="1"/><text x="475" y="657.0" text-anchor="end" font-size="10" fill="#a3a3a3">200</text><line x1="479" y1="605.8" x2="1009.5" y2="605.8" stroke="#eeeeeb" stroke-width="1"/><text x="475" y="609.9" text-anchor="end" font-size="10" fill="#a3a3a3">300</text><line x1="479" y1="558.7" x2="1009.5" y2="558.7" stroke="#eeeeeb" stroke-width="1"/><text x="475" y="562.8" text-anchor="end" font-size="10" fill="#a3a3a3">400</text><line x1="479" y1="511.7" x2="1009.5" y2="511.7" stroke="#eeeeeb" stroke-width="1"/><text x="475" y="515.8" text-anchor="end" font-size="10" fill="#a3a3a3">500</text><line x1="479" y1="464.6" x2="1009.5" y2="464.6" stroke="#eeeeeb" stroke-width="1"/><text x="475" y="468.7" text-anchor="end" font-size="10" fill="#a3a3a3">600</text><line x1="492.0" y1="464.6" x2="492.0" y2="747" stroke="#eeeeeb"/><text x="492.0" y="761.9" text-anchor="middle" font-size="10" fill="#a3a3a3">0</text><line x1="624.5" y1="464.6" x2="624.5" y2="747" stroke="#eeeeeb"/><text x="624.5" y="761.9" text-anchor="middle" font-size="10" fill="#a3a3a3">5</text><line x1="757.0" y1="464.6" x2="757.0" y2="747" stroke="#eeeeeb"/><text x="757.0" y="761.9" text-anchor="middle" font-size="10" fill="#a3a3a3">10</text><line x1="889.5" y1="464.6" x2="889.5" y2="747" stroke="#eeeeeb"/><text x="889.5" y="761.9" text-anchor="middle" font-size="10" fill="#a3a3a3">15</text><rect x="481.0" y="506.5" width="10.2" height="240.5" fill="#0195fd"/><rect x="493.0" y="732.9" width="10.1" height="14.1" fill="#fe4512"/><rect x="507.5" y="506.5" width="10.2" height="240.5" fill="#0195fd"/><rect x="519.5" y="732.9" width="10.1" height="14.1" fill="#fe4512"/><rect x="534.0" y="506.5" width="10.2" height="240.5" fill="#0195fd"/><rect x="546.0" y="732.9" width="10.1" height="14.1" fill="#fe4512"/><rect x="560.5" y="506.5" width="10.2" height="240.5" fill="#0195fd"/><rect x="572.5" y="732.9" width="10.1" height="14.1" fill="#fe4512"/><rect x="587.0" y="506.5" width="10.2" height="240.5" fill="#0195fd"/><rect x="599.0" y="732.9" width="10.1" height="14.1" fill="#fe4512"/><rect x="613.5" y="506.5" width="10.2" height="240.5" fill="#0195fd"/><rect x="625.5" y="732.9" width="10.1" height="14.1" fill="#fe4512"/><rect x="640.0" y="506.5" width="10.2" height="240.5" fill="#0195fd"/><rect x="652.0" y="732.9" width="10.1" height="14.1" fill="#fe4512"/><rect x="666.5" y="506.5" width="10.2" height="240.5" fill="#0195fd"/><rect x="678.5" y="732.9" width="10.1" height="14.1" fill="#fe4512"/><rect x="693.0" y="506.5" width="10.2" height="240.5" fill="#0195fd"/><rect x="705.0" y="732.9" width="10.1" height="14.1" fill="#fe4512"/><rect x="719.5" y="506.5" width="10.2" height="240.5" fill="#0195fd"/><rect x="731.5" y="732.9" width="10.1" height="14.1" fill="#fe4512"/><rect x="746.0" y="506.5" width="10.2" height="240.5" fill="#0195fd"/><rect x="758.0" y="732.9" width="10.1" height="14.1" fill="#fe4512"/><rect x="772.5" y="506.5" width="10.2" height="240.5" fill="#0195fd"/><rect x="784.5" y="732.9" width="10.1" height="14.1" fill="#fe4512"/><rect x="799.0" y="506.5" width="10.2" height="240.5" fill="#0195fd"/><rect x="811.0" y="732.9" width="10.1" height="14.1" fill="#fe4512"/><rect x="825.5" y="506.5" width="10.2" height="240.5" fill="#0195fd"/><rect x="837.5" y="732.9" width="10.1" height="14.1" fill="#fe4512"/><rect x="852.0" y="506.5" width="10.2" height="240.5" fill="#0195fd"/><rect x="864.0" y="732.9" width="10.1" height="14.1" fill="#fe4512"/><rect x="878.5" y="506.5" width="10.2" height="240.5" fill="#0195fd"/><rect x="890.5" y="732.9" width="10.1" height="14.1" fill="#fe4512"/><rect x="905.0" y="506.5" width="10.2" height="240.5" fill="#0195fd"/><rect x="917.0" y="732.9" width="10.1" height="14.1" fill="#fe4512"/><rect x="931.5" y="506.5" width="10.2" height="240.5" fill="#0195fd"/><rect x="943.5" y="732.9" width="10.1" height="14.1" fill="#fe4512"/><rect x="958.0" y="506.5" width="10.2" height="240.5" fill="#0195fd"/><rect x="970.0" y="732.9" width="10.1" height="14.1" fill="#fe4512"/><rect x="984.5" y="506.5" width="10.2" height="240.5" fill="#0195fd"/><rect x="996.5" y="732.9" width="10.1" height="14.1" fill="#fe4512"/><line x1="1183.6" y1="733.7" x2="1688.4" y2="733.7" stroke="#eeeeeb"/><text x="1179.4" y="737.8" text-anchor="end" font-size="10" fill="#a3a3a3">-20000</text><line x1="1183.6" y1="688.9" x2="1688.4" y2="688.9" stroke="#eeeeeb"/><text x="1179.4" y="693.0" text-anchor="end" font-size="10" fill="#a3a3a3">-10000</text><line x1="1183.6" y1="644.0" x2="1688.4" y2="644.0" stroke="#eeeeeb"/><text x="1179.4" y="648.1" text-anchor="end" font-size="10" fill="#a3a3a3">0</text><line x1="1183.6" y1="599.1" x2="1688.4" y2="599.1" stroke="#eeeeeb"/><text x="1179.4" y="603.2" text-anchor="end" font-size="10" fill="#a3a3a3">10000</text><line x1="1183.6" y1="554.3" x2="1688.4" y2="554.3" stroke="#eeeeeb"/><text x="1179.4" y="558.4" text-anchor="end" font-size="10" fill="#a3a3a3">20000</text><line x1="1183.6" y1="509.4" x2="1688.4" y2="509.4" stroke="#eeeeeb"/><text x="1179.4" y="513.5" text-anchor="end" font-size="10" fill="#a3a3a3">30000</text><line x1="1183.6" y1="464.6" x2="1688.4" y2="464.6" stroke="#eeeeeb"/><text x="1179.4" y="468.7" text-anchor="end" font-size="10" fill="#a3a3a3">40000</text><line x1="1196.0" y1="464.6" x2="1196.0" y2="733.7" stroke="#eeeeeb"/><line x1="1221.2" y1="464.6" x2="1221.2" y2="733.7" stroke="#eeeeeb"/><line x1="1246.5" y1="464.6" x2="1246.5" y2="733.7" stroke="#eeeeeb"/><line x1="1271.8" y1="464.6" x2="1271.8" y2="733.7" stroke="#eeeeeb"/><line x1="1297.0" y1="464.6" x2="1297.0" y2="733.7" stroke="#eeeeeb"/><line x1="1322.2" y1="464.6" x2="1322.2" y2="733.7" stroke="#eeeeeb"/><line x1="1347.5" y1="464.6" x2="1347.5" y2="733.7" stroke="#eeeeeb"/><line x1="1372.8" y1="464.6" x2="1372.8" y2="733.7" stroke="#eeeeeb"/><line x1="1398.0" y1="464.6" x2="1398.0" y2="733.7" stroke="#eeeeeb"/><line x1="1423.2" y1="464.6" x2="1423.2" y2="733.7" stroke="#eeeeeb"/><line x1="1448.5" y1="464.6" x2="1448.5" y2="733.7" stroke="#eeeeeb"/><line x1="1473.8" y1="464.6" x2="1473.8" y2="733.7" stroke="#eeeeeb"/><line x1="1499.0" y1="464.6" x2="1499.0" y2="733.7" stroke="#eeeeeb"/><line x1="1524.2" y1="464.6" x2="1524.2" y2="733.7" stroke="#eeeeeb"/><line x1="1549.5" y1="464.6" x2="1549.5" y2="733.7" stroke="#eeeeeb"/><line x1="1574.8" y1="464.6" x2="1574.8" y2="733.7" stroke="#eeeeeb"/><line x1="1600.0" y1="464.6" x2="1600.0" y2="733.7" stroke="#eeeeeb"/><line x1="1625.2" y1="464.6" x2="1625.2" y2="733.7" stroke="#eeeeeb"/><line x1="1650.5" y1="464.6" x2="1650.5" y2="733.7" stroke="#eeeeeb"/><line x1="1675.8" y1="464.6" x2="1675.8" y2="733.7" stroke="#eeeeeb"/><rect x="1185.2" y="644.0" width="21.6" height="69.5" fill="#0195fd"/><text x="1196.0" y="748.6" text-anchor="middle" font-size="10" fill="#a3a3a3">0</text><rect x="1210.5" y="644.0" width="21.6" height="58.3" fill="#0195fd"/><text x="1221.25" y="748.6" text-anchor="middle" font-size="10" fill="#a3a3a3">1</text><rect x="1235.7" y="644.0" width="21.6" height="47.2" fill="#0195fd"/><text x="1246.5" y="748.6" text-anchor="middle" font-size="10" fill="#a3a3a3">2</text><rect x="1261.0" y="644.0" width="21.6" height="36.0" fill="#0195fd"/><text x="1271.75" y="748.6" text-anchor="middle" font-size="10" fill="#a3a3a3">3</text><rect x="1286.2" y="644.0" width="21.6" height="24.8" fill="#0195fd"/><text x="1297.0" y="748.6" text-anchor="middle" font-size="10" fill="#a3a3a3">4</text><rect x="1311.5" y="644.0" width="21.6" height="13.7" fill="#0195fd"/><text x="1322.25" y="748.6" text-anchor="middle" font-size="10" fill="#a3a3a3">5</text><rect x="1336.7" y="644.0" width="21.6" height="2.0" fill="#0195fd"/><text x="1347.5" y="748.6" text-anchor="middle" font-size="10" fill="#a3a3a3">6</text><rect x="1362.0" y="635.3" width="21.6" height="8.7" fill="#0195fd"/><text x="1372.75" y="748.6" text-anchor="middle" font-size="10" fill="#a3a3a3">7</text><rect x="1387.2" y="624.2" width="21.6" height="19.8" fill="#0195fd"/><text x="1398.0" y="748.6" text-anchor="middle" font-size="10" fill="#a3a3a3">8</text><rect x="1412.5" y="613.0" width="21.6" height="31.0" fill="#0195fd"/><text x="1423.25" y="748.6" text-anchor="middle" font-size="10" fill="#a3a3a3">9</text><rect x="1437.7" y="601.8" width="21.6" height="42.2" fill="#0195fd"/><text x="1448.5" y="748.6" text-anchor="middle" font-size="10" fill="#a3a3a3">10</text><rect x="1463.0" y="590.7" width="21.6" height="53.3" fill="#0195fd"/><text x="1473.75" y="748.6" text-anchor="middle" font-size="10" fill="#a3a3a3">11</text><rect x="1488.2" y="579.5" width="21.6" height="64.5" fill="#0195fd"/><text x="1499.0" y="748.6" text-anchor="middle" font-size="10" fill="#a3a3a3">12</text><rect x="1513.5" y="568.3" width="21.6" height="75.7" fill="#0195fd"/><text x="1524.25" y="748.6" text-anchor="middle" font-size="10" fill="#a3a3a3">13</text><rect x="1538.7" y="557.2" width="21.6" height="86.8" fill="#0195fd"/><text x="1549.5" y="748.6" text-anchor="middle" font-size="10" fill="#a3a3a3">14</text><rect x="1564.0" y="546.0" width="21.6" height="98.0" fill="#0195fd"/><text x="1574.75" y="748.6" text-anchor="middle" font-size="10" fill="#a3a3a3">15</text><rect x="1589.2" y="534.8" width="21.6" height="109.2" fill="#0195fd"/><text x="1600.0" y="748.6" text-anchor="middle" font-size="10" fill="#a3a3a3">16</text><rect x="1614.5" y="523.7" width="21.6" height="120.3" fill="#0195fd"/><text x="1625.25" y="748.6" text-anchor="middle" font-size="10" fill="#a3a3a3">17</text><rect x="1639.7" y="512.5" width="21.6" height="131.5" fill="#0195fd"/><text x="1650.5" y="748.6" text-anchor="middle" font-size="10" fill="#a3a3a3">18</text><rect x="1665.0" y="501.3" width="21.6" height="142.7" fill="#0195fd"/><text x="1675.75" y="748.6" text-anchor="middle" font-size="10" fill="#a3a3a3">19</text><text x="1436" y="757.8" text-anchor="middle" font-size="10" fill="#a3a3a3">Entrate / Uscite</text><text transform="translate(1145.8,599) rotate(-90)" text-anchor="middle" font-size="10" fill="#a3a3a3">[€]</text><line x1="507.3" y1="997.7" x2="1008.7" y2="997.7" stroke="#eeeeeb"/><text x="503.2" y="1001.8" text-anchor="end" font-size="10" fill="#a3a3a3">-20000</text><line x1="507.3" y1="942.6" x2="1008.7" y2="942.6" stroke="#eeeeeb"/><text x="503.2" y="946.7" text-anchor="end" font-size="10" fill="#a3a3a3">-10000</text><line x1="507.3" y1="887.5" x2="1008.7" y2="887.5" stroke="#eeeeeb"/><text x="503.2" y="891.6" text-anchor="end" font-size="10" fill="#a3a3a3">0</text><line x1="507.3" y1="832.4" x2="1008.7" y2="832.4" stroke="#eeeeeb"/><text x="503.2" y="836.5" text-anchor="end" font-size="10" fill="#a3a3a3">10000</text><line x1="507.3" y1="777.3" x2="1008.7" y2="777.3" stroke="#eeeeeb"/><text x="503.2" y="781.4" text-anchor="end" font-size="10" fill="#a3a3a3">20000</text><line x1="519.4" y1="777.4" x2="519.4" y2="997.7" stroke="#eeeeeb"/><line x1="544.5" y1="777.4" x2="544.5" y2="997.7" stroke="#eeeeeb"/><line x1="569.6" y1="777.4" x2="569.6" y2="997.7" stroke="#eeeeeb"/><line x1="594.7" y1="777.4" x2="594.7" y2="997.7" stroke="#eeeeeb"/><line x1="619.8" y1="777.4" x2="619.8" y2="997.7" stroke="#eeeeeb"/><line x1="644.9" y1="777.4" x2="644.9" y2="997.7" stroke="#eeeeeb"/><line x1="669.9" y1="777.4" x2="669.9" y2="997.7" stroke="#eeeeeb"/><line x1="695.0" y1="777.4" x2="695.0" y2="997.7" stroke="#eeeeeb"/><line x1="720.1" y1="777.4" x2="720.1" y2="997.7" stroke="#eeeeeb"/><line x1="745.2" y1="777.4" x2="745.2" y2="997.7" stroke="#eeeeeb"/><line x1="770.3" y1="777.4" x2="770.3" y2="997.7" stroke="#eeeeeb"/><line x1="795.4" y1="777.4" x2="795.4" y2="997.7" stroke="#eeeeeb"/><line x1="820.5" y1="777.4" x2="820.5" y2="997.7" stroke="#eeeeeb"/><line x1="845.6" y1="777.4" x2="845.6" y2="997.7" stroke="#eeeeeb"/><line x1="870.7" y1="777.4" x2="870.7" y2="997.7" stroke="#eeeeeb"/><line x1="895.8" y1="777.4" x2="895.8" y2="997.7" stroke="#eeeeeb"/><line x1="920.8" y1="777.4" x2="920.8" y2="997.7" stroke="#eeeeeb"/><line x1="945.9" y1="777.4" x2="945.9" y2="997.7" stroke="#eeeeeb"/><line x1="971.0" y1="777.4" x2="971.0" y2="997.7" stroke="#eeeeeb"/><line x1="996.1" y1="777.4" x2="996.1" y2="997.7" stroke="#eeeeeb"/><rect x="508.8" y="887.5" width="21.2" height="85.1" fill="#0195fd"/><text x="519.4" y="1012.4" text-anchor="middle" font-size="10" fill="#a3a3a3">0</text><rect x="533.9" y="887.5" width="21.2" height="73.0" fill="#0195fd"/><text x="544.49" y="1012.4" text-anchor="middle" font-size="10" fill="#a3a3a3">1</text><rect x="559.0" y="887.5" width="21.2" height="60.8" fill="#0195fd"/><text x="569.5799999999999" y="1012.4" text-anchor="middle" font-size="10" fill="#a3a3a3">2</text><rect x="584.1" y="887.5" width="21.2" height="49.0" fill="#0195fd"/><text x="594.67" y="1012.4" text-anchor="middle" font-size="10" fill="#a3a3a3">3</text><rect x="609.2" y="887.5" width="21.2" height="37.7" fill="#0195fd"/><text x="619.76" y="1012.4" text-anchor="middle" font-size="10" fill="#a3a3a3">4</text><rect x="634.2" y="887.5" width="21.2" height="26.8" fill="#0195fd"/><text x="644.85" y="1012.4" text-anchor="middle" font-size="10" fill="#a3a3a3">5</text><rect x="659.3" y="887.5" width="21.2" height="16.3" fill="#0195fd"/><text x="669.9399999999999" y="1012.4" text-anchor="middle" font-size="10" fill="#a3a3a3">6</text><rect x="684.4" y="887.5" width="21.2" height="6.2" fill="#0195fd"/><text x="695.03" y="1012.4" text-anchor="middle" font-size="10" fill="#a3a3a3">7</text><rect x="709.5" y="884.3" width="21.2" height="3.2" fill="#0195fd"/><text x="720.12" y="1012.4" text-anchor="middle" font-size="10" fill="#a3a3a3">8</text><rect x="734.6" y="875.4" width="21.2" height="12.1" fill="#0195fd"/><text x="745.21" y="1012.4" text-anchor="middle" font-size="10" fill="#a3a3a3">9</text><rect x="759.7" y="866.1" width="21.2" height="21.4" fill="#0195fd"/><text x="770.3" y="1012.4" text-anchor="middle" font-size="10" fill="#a3a3a3">10</text><rect x="784.8" y="858.0" width="21.2" height="29.5" fill="#0195fd"/><text x="795.39" y="1012.4" text-anchor="middle" font-size="10" fill="#a3a3a3">11</text><rect x="809.9" y="849.5" width="21.2" height="38.0" fill="#0195fd"/><text x="820.48" y="1012.4" text-anchor="middle" font-size="10" fill="#a3a3a3">12</text><rect x="835.0" y="841.4" width="21.2" height="46.1" fill="#0195fd"/><text x="845.5699999999999" y="1012.4" text-anchor="middle" font-size="10" fill="#a3a3a3">13</text><rect x="860.1" y="834.1" width="21.2" height="53.4" fill="#0195fd"/><text x="870.66" y="1012.4" text-anchor="middle" font-size="10" fill="#a3a3a3">14</text><rect x="885.1" y="826.8" width="21.2" height="60.7" fill="#0195fd"/><text x="895.75" y="1012.4" text-anchor="middle" font-size="10" fill="#a3a3a3">15</text><rect x="910.2" y="820.0" width="21.2" height="67.5" fill="#0195fd"/><text x="920.8399999999999" y="1012.4" text-anchor="middle" font-size="10" fill="#a3a3a3">16</text><rect x="935.3" y="813.1" width="21.2" height="74.4" fill="#0195fd"/><text x="945.93" y="1012.4" text-anchor="middle" font-size="10" fill="#a3a3a3">17</text><rect x="960.4" y="806.5" width="21.2" height="81.0" fill="#0195fd"/><text x="971.02" y="1012.4" text-anchor="middle" font-size="10" fill="#a3a3a3">18</text><rect x="985.5" y="800.1" width="21.2" height="87.4" fill="#0195fd"/><text x="996.1099999999999" y="1012.4" text-anchor="middle" font-size="10" fill="#a3a3a3">19</text><text x="757.6" y="1021.7" text-anchor="middle" font-size="10" fill="#a3a3a3">VAN</text><text transform="translate(468,886.8) rotate(-90)" text-anchor="middle" font-size="10" fill="#a3a3a3">[€]</text><line x1="1173.1" y1="993.6" x2="1684.2" y2="993.6" stroke="#eeeeeb"/><text x="1169" y="997.7" text-anchor="end" font-size="10" fill="#a3a3a3">-100</text><line x1="1173.1" y1="963.3" x2="1684.2" y2="963.3" stroke="#eeeeeb"/><text x="1169" y="967.4" text-anchor="end" font-size="10" fill="#a3a3a3">-80</text><line x1="1173.1" y1="933.1" x2="1684.2" y2="933.1" stroke="#eeeeeb"/><text x="1169" y="937.2" text-anchor="end" font-size="10" fill="#a3a3a3">-60</text><line x1="1173.1" y1="902.8" x2="1684.2" y2="902.8" stroke="#eeeeeb"/><text x="1169" y="906.9" text-anchor="end" font-size="10" fill="#a3a3a3">-40</text><line x1="1173.1" y1="872.5" x2="1684.2" y2="872.5" stroke="#eeeeeb"/><text x="1169" y="876.6" text-anchor="end" font-size="10" fill="#a3a3a3">-20</text><line x1="1173.1" y1="842.2" x2="1684.2" y2="842.2" stroke="#eeeeeb"/><text x="1169" y="846.3" text-anchor="end" font-size="10" fill="#a3a3a3">0</text><line x1="1173.1" y1="812.0" x2="1684.2" y2="812.0" stroke="#eeeeeb"/><text x="1169" y="816.1" text-anchor="end" font-size="10" fill="#a3a3a3">20</text><line x1="1173.1" y1="781.7" x2="1684.2" y2="781.7" stroke="#eeeeeb"/><text x="1169" y="785.8" text-anchor="end" font-size="10" fill="#a3a3a3">40</text><line x1="1176.0" y1="781.7" x2="1176.0" y2="993.6" stroke="#eeeeeb"/><text x="1176.0" y="1012.7" text-anchor="middle" font-size="10" fill="#a3a3a3">0</text><line x1="1201.1" y1="781.7" x2="1201.1" y2="993.6" stroke="#eeeeeb"/><text x="1201.14" y="1012.7" text-anchor="middle" font-size="10" fill="#a3a3a3">1</text><line x1="1226.3" y1="781.7" x2="1226.3" y2="993.6" stroke="#eeeeeb"/><text x="1226.28" y="1012.7" text-anchor="middle" font-size="10" fill="#a3a3a3">2</text><line x1="1251.4" y1="781.7" x2="1251.4" y2="993.6" stroke="#eeeeeb"/><text x="1251.42" y="1012.7" text-anchor="middle" font-size="10" fill="#a3a3a3">3</text><line x1="1276.6" y1="781.7" x2="1276.6" y2="993.6" stroke="#eeeeeb"/><text x="1276.56" y="1012.7" text-anchor="middle" font-size="10" fill="#a3a3a3">4</text><line x1="1301.7" y1="781.7" x2="1301.7" y2="993.6" stroke="#eeeeeb"/><text x="1301.7" y="1012.7" text-anchor="middle" font-size="10" fill="#a3a3a3">5</text><line x1="1326.8" y1="781.7" x2="1326.8" y2="993.6" stroke="#eeeeeb"/><text x="1326.84" y="1012.7" text-anchor="middle" font-size="10" fill="#a3a3a3">6</text><line x1="1352.0" y1="781.7" x2="1352.0" y2="993.6" stroke="#eeeeeb"/><text x="1351.98" y="1012.7" text-anchor="middle" font-size="10" fill="#a3a3a3">7</text><line x1="1377.1" y1="781.7" x2="1377.1" y2="993.6" stroke="#eeeeeb"/><text x="1377.12" y="1012.7" text-anchor="middle" font-size="10" fill="#a3a3a3">8</text><line x1="1402.3" y1="781.7" x2="1402.3" y2="993.6" stroke="#eeeeeb"/><text x="1402.26" y="1012.7" text-anchor="middle" font-size="10" fill="#a3a3a3">9</text><line x1="1427.4" y1="781.7" x2="1427.4" y2="993.6" stroke="#eeeeeb"/><text x="1427.4" y="1012.7" text-anchor="middle" font-size="10" fill="#a3a3a3">10</text><line x1="1452.5" y1="781.7" x2="1452.5" y2="993.6" stroke="#eeeeeb"/><text x="1452.54" y="1012.7" text-anchor="middle" font-size="10" fill="#a3a3a3">11</text><line x1="1477.7" y1="781.7" x2="1477.7" y2="993.6" stroke="#eeeeeb"/><text x="1477.68" y="1012.7" text-anchor="middle" font-size="10" fill="#a3a3a3">12</text><line x1="1502.8" y1="781.7" x2="1502.8" y2="993.6" stroke="#eeeeeb"/><text x="1502.82" y="1012.7" text-anchor="middle" font-size="10" fill="#a3a3a3">13</text><line x1="1528.0" y1="781.7" x2="1528.0" y2="993.6" stroke="#eeeeeb"/><text x="1527.96" y="1012.7" text-anchor="middle" font-size="10" fill="#a3a3a3">14</text><line x1="1553.1" y1="781.7" x2="1553.1" y2="993.6" stroke="#eeeeeb"/><text x="1553.1" y="1012.7" text-anchor="middle" font-size="10" fill="#a3a3a3">15</text><line x1="1578.2" y1="781.7" x2="1578.2" y2="993.6" stroke="#eeeeeb"/><text x="1578.24" y="1012.7" text-anchor="middle" font-size="10" fill="#a3a3a3">16</text><line x1="1603.4" y1="781.7" x2="1603.4" y2="993.6" stroke="#eeeeeb"/><text x="1603.38" y="1012.7" text-anchor="middle" font-size="10" fill="#a3a3a3">17</text><line x1="1628.5" y1="781.7" x2="1628.5" y2="993.6" stroke="#eeeeeb"/><text x="1628.52" y="1012.7" text-anchor="middle" font-size="10" fill="#a3a3a3">18</text><line x1="1653.7" y1="781.7" x2="1653.7" y2="993.6" stroke="#eeeeeb"/><text x="1653.66" y="1012.7" text-anchor="middle" font-size="10" fill="#a3a3a3">19</text><line x1="1678.8" y1="781.7" x2="1678.8" y2="993.6" stroke="#eeeeeb"/><text x="1678.8" y="1012.7" text-anchor="middle" font-size="10" fill="#a3a3a3">20</text><clipPath id="tirclip"><path d="M1176.0,972.9 C1180.2,965.0 1192.8,938.9 1201.1,925.6 C1209.5,912.3 1217.9,901.9 1226.3,893.1 C1234.7,884.3 1243.0,878.4 1251.4,872.7 C1259.8,867.0 1268.2,862.7 1276.6,858.9 C1284.9,855.1 1293.3,852.4 1301.7,849.8 C1310.1,847.2 1318.5,845.3 1326.8,843.5 C1335.2,841.6 1343.6,839.8 1352.0,838.5 C1360.4,837.1 1368.7,836.1 1377.1,835.1 C1385.5,834.2 1393.9,833.5 1402.3,832.7 C1410.6,832.0 1419.0,831.2 1427.4,830.6 C1435.8,829.9 1444.2,829.3 1452.5,828.8 C1460.9,828.2 1469.3,827.7 1477.7,827.3 C1486.1,826.9 1494.4,826.6 1502.8,826.4 C1511.2,826.1 1519.6,825.9 1528.0,825.6 C1536.3,825.3 1544.7,824.9 1553.1,824.7 C1561.5,824.5 1569.9,824.4 1578.2,824.2 C1586.6,824.1 1595.0,823.9 1603.4,823.8 C1611.8,823.7 1620.1,823.6 1628.5,823.5 C1636.9,823.4 1649.5,823.3 1653.7,823.2 L1653.7,993.6 L1176.0,993.6 Z"/></clipPath><path d="M1176.0,972.9 C1180.2,965.0 1192.8,938.9 1201.1,925.6 C1209.5,912.3 1217.9,901.9 1226.3,893.1 C1234.7,884.3 1243.0,878.4 1251.4,872.7 C1259.8,867.0 1268.2,862.7 1276.6,858.9 C1284.9,855.1 1293.3,852.4 1301.7,849.8 C1310.1,847.2 1318.5,845.3 1326.8,843.5 C1335.2,841.6 1343.6,839.8 1352.0,838.5 C1360.4,837.1 1368.7,836.1 1377.1,835.1 C1385.5,834.2 1393.9,833.5 1402.3,832.7 C1410.6,832.0 1419.0,831.2 1427.4,830.6 C1435.8,829.9 1444.2,829.3 1452.5,828.8 C1460.9,828.2 1469.3,827.7 1477.7,827.3 C1486.1,826.9 1494.4,826.6 1502.8,826.4 C1511.2,826.1 1519.6,825.9 1528.0,825.6 C1536.3,825.3 1544.7,824.9 1553.1,824.7 C1561.5,824.5 1569.9,824.4 1578.2,824.2 C1586.6,824.1 1595.0,823.9 1603.4,823.8 C1611.8,823.7 1620.1,823.6 1628.5,823.5 C1636.9,823.4 1649.5,823.3 1653.7,823.2 L1653.7,993.6 L1176.0,993.6 Z" fill="#d4eafc" fill-opacity="0.9"/><g clip-path="url(#tirclip)"><line x1="1176.0" y1="781.7" x2="1176.0" y2="993.6" stroke="#c9def0" stroke-opacity="0.5"/><line x1="1201.1" y1="781.7" x2="1201.1" y2="993.6" stroke="#c9def0" stroke-opacity="0.5"/><line x1="1226.3" y1="781.7" x2="1226.3" y2="993.6" stroke="#c9def0" stroke-opacity="0.5"/><line x1="1251.4" y1="781.7" x2="1251.4" y2="993.6" stroke="#c9def0" stroke-opacity="0.5"/><line x1="1276.6" y1="781.7" x2="1276.6" y2="993.6" stroke="#c9def0" stroke-opacity="0.5"/><line x1="1301.7" y1="781.7" x2="1301.7" y2="993.6" stroke="#c9def0" stroke-opacity="0.5"/><line x1="1326.8" y1="781.7" x2="1326.8" y2="993.6" stroke="#c9def0" stroke-opacity="0.5"/><line x1="1352.0" y1="781.7" x2="1352.0" y2="993.6" stroke="#c9def0" stroke-opacity="0.5"/><line x1="1377.1" y1="781.7" x2="1377.1" y2="993.6" stroke="#c9def0" stroke-opacity="0.5"/><line x1="1402.3" y1="781.7" x2="1402.3" y2="993.6" stroke="#c9def0" stroke-opacity="0.5"/><line x1="1427.4" y1="781.7" x2="1427.4" y2="993.6" stroke="#c9def0" stroke-opacity="0.5"/><line x1="1452.5" y1="781.7" x2="1452.5" y2="993.6" stroke="#c9def0" stroke-opacity="0.5"/><line x1="1477.7" y1="781.7" x2="1477.7" y2="993.6" stroke="#c9def0" stroke-opacity="0.5"/><line x1="1502.8" y1="781.7" x2="1502.8" y2="993.6" stroke="#c9def0" stroke-opacity="0.5"/><line x1="1528.0" y1="781.7" x2="1528.0" y2="993.6" stroke="#c9def0" stroke-opacity="0.5"/><line x1="1553.1" y1="781.7" x2="1553.1" y2="993.6" stroke="#c9def0" stroke-opacity="0.5"/><line x1="1578.2" y1="781.7" x2="1578.2" y2="993.6" stroke="#c9def0" stroke-opacity="0.5"/><line x1="1603.4" y1="781.7" x2="1603.4" y2="993.6" stroke="#c9def0" stroke-opacity="0.5"/><line x1="1628.5" y1="781.7" x2="1628.5" y2="993.6" stroke="#c9def0" stroke-opacity="0.5"/><line x1="1653.7" y1="781.7" x2="1653.7" y2="993.6" stroke="#c9def0" stroke-opacity="0.5"/><line x1="1176.0" y1="993.6" x2="1653.7" y2="993.6" stroke="#c9def0" stroke-opacity="0.5"/><line x1="1176.0" y1="963.3" x2="1653.7" y2="963.3" stroke="#c9def0" stroke-opacity="0.5"/><line x1="1176.0" y1="933.1" x2="1653.7" y2="933.1" stroke="#c9def0" stroke-opacity="0.5"/><line x1="1176.0" y1="902.8" x2="1653.7" y2="902.8" stroke="#c9def0" stroke-opacity="0.5"/><line x1="1176.0" y1="872.5" x2="1653.7" y2="872.5" stroke="#c9def0" stroke-opacity="0.5"/><line x1="1176.0" y1="842.2" x2="1653.7" y2="842.2" stroke="#c9def0" stroke-opacity="0.5"/><line x1="1176.0" y1="812.0" x2="1653.7" y2="812.0" stroke="#c9def0" stroke-opacity="0.5"/><line x1="1176.0" y1="781.7" x2="1653.7" y2="781.7" stroke="#c9def0" stroke-opacity="0.5"/></g><path d="M1176.0,972.9 C1180.2,965.0 1192.8,938.9 1201.1,925.6 C1209.5,912.3 1217.9,901.9 1226.3,893.1 C1234.7,884.3 1243.0,878.4 1251.4,872.7 C1259.8,867.0 1268.2,862.7 1276.6,858.9 C1284.9,855.1 1293.3,852.4 1301.7,849.8 C1310.1,847.2 1318.5,845.3 1326.8,843.5 C1335.2,841.6 1343.6,839.8 1352.0,838.5 C1360.4,837.1 1368.7,836.1 1377.1,835.1 C1385.5,834.2 1393.9,833.5 1402.3,832.7 C1410.6,832.0 1419.0,831.2 1427.4,830.6 C1435.8,829.9 1444.2,829.3 1452.5,828.8 C1460.9,828.2 1469.3,827.7 1477.7,827.3 C1486.1,826.9 1494.4,826.6 1502.8,826.4 C1511.2,826.1 1519.6,825.9 1528.0,825.6 C1536.3,825.3 1544.7,824.9 1553.1,824.7 C1561.5,824.5 1569.9,824.4 1578.2,824.2 C1586.6,824.1 1595.0,823.9 1603.4,823.8 C1611.8,823.7 1620.1,823.6 1628.5,823.5 C1636.9,823.4 1649.5,823.3 1653.7,823.2" fill="none" stroke="#0195fd" stroke-width="2.2"/><circle cx="1176.0" cy="972.9" r="3.6" fill="#fff" stroke="#0195fd" stroke-width="1.8"/><circle cx="1201.1" cy="925.6" r="3.6" fill="#fff" stroke="#0195fd" stroke-width="1.8"/><circle cx="1226.3" cy="893.1" r="3.6" fill="#fff" stroke="#0195fd" stroke-width="1.8"/><circle cx="1251.4" cy="872.7" r="3.6" fill="#fff" stroke="#0195fd" stroke-width="1.8"/><circle cx="1276.6" cy="858.9" r="3.6" fill="#fff" stroke="#0195fd" stroke-width="1.8"/><circle cx="1301.7" cy="849.8" r="3.6" fill="#fff" stroke="#0195fd" stroke-width="1.8"/><circle cx="1326.8" cy="843.5" r="3.6" fill="#fff" stroke="#0195fd" stroke-width="1.8"/><circle cx="1352.0" cy="838.5" r="3.6" fill="#fff" stroke="#0195fd" stroke-width="1.8"/><circle cx="1377.1" cy="835.1" r="3.6" fill="#fff" stroke="#0195fd" stroke-width="1.8"/><circle cx="1402.3" cy="832.7" r="3.6" fill="#fff" stroke="#0195fd" stroke-width="1.8"/><circle cx="1427.4" cy="830.6" r="3.6" fill="#fff" stroke="#0195fd" stroke-width="1.8"/><circle cx="1452.5" cy="828.8" r="3.6" fill="#fff" stroke="#0195fd" stroke-width="1.8"/><circle cx="1477.7" cy="827.3" r="3.6" fill="#fff" stroke="#0195fd" stroke-width="1.8"/><circle cx="1502.8" cy="826.4" r="3.6" fill="#fff" stroke="#0195fd" stroke-width="1.8"/><circle cx="1528.0" cy="825.6" r="3.6" fill="#fff" stroke="#0195fd" stroke-width="1.8"/><circle cx="1553.1" cy="824.7" r="3.6" fill="#fff" stroke="#0195fd" stroke-width="1.8"/><circle cx="1578.2" cy="824.2" r="3.6" fill="#fff" stroke="#0195fd" stroke-width="1.8"/><circle cx="1603.4" cy="823.8" r="3.6" fill="#fff" stroke="#0195fd" stroke-width="1.8"/><circle cx="1628.5" cy="823.5" r="3.6" fill="#fff" stroke="#0195fd" stroke-width="1.8"/><circle cx="1653.7" cy="823.2" r="3.6" fill="#fff" stroke="#0195fd" stroke-width="1.8"/><text x="1427.6" y="1021.9" text-anchor="middle" font-size="10" fill="#a3a3a3">TIR</text><text transform="translate(1145.8,886.4) rotate(-90)" text-anchor="middle" font-size="10" fill="#a3a3a3">[€]</text></svg><div class="t" style="left:336px;top:606px;font-size:11px;color:#000;letter-spacing:-0.177px;">Entrate uscite</div><div class="t" style="left:1013px;top:606px;font-size:11px;color:#000;letter-spacing:-0.222px;">Flusso di cassa cumulato</div><div class="t" style="left:336px;top:894px;font-size:11px;color:#000;letter-spacing:0.05px;">VAN</div><div class="t" style="left:1013px;top:894px;font-size:11px;color:#000;letter-spacing:-0.217px;">TIR [%]</div></body></html>
